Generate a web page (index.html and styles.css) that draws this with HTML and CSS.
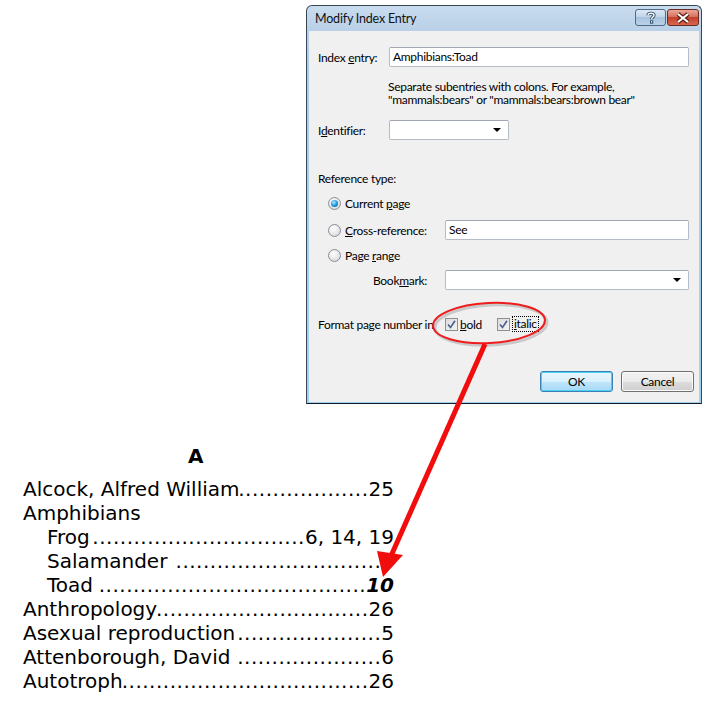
FILE: index.html
```html
<!DOCTYPE html>
<html>
<head>
<meta charset="utf-8">
<title>Modify Index Entry</title>
<link rel="stylesheet" href="styles.css">
</head>
<body>
<div class="page">
  <div class="dialog">
    <div class="titlebar">
      <span class="title">Modify Index Entry</span>
      <div class="caption-btns">
        <span class="cap-btn help"><svg width="12" height="13" viewBox="0 0 12 13"><path d="M3 4.2 C3 1.6 9 1.6 9 4.2 C9 6 6.6 6.2 6.6 8.2" fill="none" stroke="#27435e" stroke-width="3.2"/><path d="M3 4.2 C3 1.6 9 1.6 9 4.2 C9 6 6.6 6.2 6.6 8.2" fill="none" stroke="#fff" stroke-width="1.4"/><rect x="5" y="9.4" width="3.2" height="3.2" fill="#27435e"/><rect x="5.9" y="10.2" width="1.4" height="1.4" fill="#fff"/></svg></span>
        <span class="cap-btn close"><svg width="16" height="12" viewBox="0 0 16 12"><path d="M3 2 L13 10 M13 2 L3 10" stroke="#5a1a12" stroke-width="4.4"/><path d="M3 2 L13 10 M13 2 L3 10" stroke="#fff" stroke-width="2.2"/></svg></span>
      </div>
    </div>
    <div class="client">
      <div class="row r-entry">
        <span class="lbl">Index <u>e</u>ntry:</span>
        <div class="field">Amphibians:Toad</div>
      </div>
      <p class="help-text">Separate subentries with colons. For example,<br>"mammals:bears" or "mammals:bears:brown bear"</p>
      <div class="row r-ident">
        <span class="lbl">I<u>d</u>entifier:</span>
        <div class="field combo narrow"><span class="caret"></span></div>
      </div>
      <div class="section">Reference type:</div>
      <div class="row r-cur"><span class="radio on"></span><span>Current <u>p</u>age</span></div>
      <div class="row r-cross"><span class="radio"></span><span class="rlabel"><u>C</u>ross-reference:</span><div class="field">See</div></div>
      <div class="row r-range"><span class="radio"></span><span>Page <u>r</u>ange</span></div>
      <div class="row r-bm"><span class="bm-label">Book<u>m</u>ark:</span><div class="field combo"><span class="caret"></span></div></div>
      <div class="row r-format">
        <span class="fmt-label">Format page number in</span>
        <span class="check"><svg width="11" height="11" viewBox="0 0 11 11"><path d="M2 5.5 L4.5 8.5 L9 1.8" fill="none" stroke="#4a5f8c" stroke-width="1.6"/></svg></span>
        <span class="cb-text"><u>b</u>old</span>
        <span class="check"><svg width="11" height="11" viewBox="0 0 11 11"><path d="M2 5.5 L4.5 8.5 L9 1.8" fill="none" stroke="#4a5f8c" stroke-width="1.6"/></svg></span>
        <span class="cb-focus"><u>i</u>talic</span>
      </div>
      <div class="buttons">
        <span class="btn default">OK</span>
        <span class="btn">Cancel</span>
      </div>
    </div>
  </div>

  <div class="index">
    <div class="letter">A</div>
    <div class="entry"><span class="name">Alcock, Alfred William</span><span class="dots"><span>...................</span></span><span class="num">25</span></div>
    <div class="entry"><span class="name">Amphibians</span></div>
    <div class="entry sub"><span class="name">Frog</span><span class="dots"><span>...............................</span></span><span class="num">6, 14, 19</span></div>
    <div class="entry sub"><span class="name">Salamander</span><span class="dots"><span>..............................</span></span><span class="num">8</span></div>
    <div class="entry sub"><span class="name">Toad</span><span class="dots"><span>.......................................</span></span><span class="num bi">10</span></div>
    <div class="entry"><span class="name">Anthropology</span><span class="dots"><span>...............................</span></span><span class="num">26</span></div>
    <div class="entry"><span class="name">Asexual reproduction</span><span class="dots"><span>.....................</span></span><span class="num">5</span></div>
    <div class="entry"><span class="name">Attenborough, David</span><span class="dots"><span>.....................</span></span><span class="num">6</span></div>
    <div class="entry"><span class="name">Autotroph</span><span class="dots"><span>....................................</span></span><span class="num">26</span></div>
  </div>
</div>

<svg class="overlay" width="715" height="703" viewBox="0 0 715 703">
  <ellipse cx="491" cy="325" rx="56" ry="20" fill="none" stroke="#9a9a9a" stroke-opacity="0.45" stroke-width="3" transform="rotate(-3 491 325)"/>
  <ellipse cx="489" cy="323" rx="56" ry="20" fill="none" stroke="#ee1c1c" stroke-width="2" transform="rotate(-3 489 323)"/>
  <line x1="485" y1="344" x2="391" y2="556" stroke="#f20d0d" stroke-width="5"/>
  <polygon points="377,551 403,555 383,577" fill="#f20d0d"/>
</svg>
</body>
</html>
```
FILE: styles.css
```css
* { box-sizing: border-box; }

body {
  margin: 0;
  width: 715px;
  height: 703px;
  position: relative;
  overflow: hidden;
  background: #ffffff;
  font-family: "Noto Sans", sans-serif;
}

.page { padding-top: 5px; }

/* ---------- dialog ---------- */
.dialog {
  margin-left: 306px;
  width: 396px;
  height: 399px;
  border: 1px solid #3a4652;
  border-bottom-color: #101820;
  border-radius: 6px 6px 0 0;
  padding: 0 2px 1px;
  background: linear-gradient(#c9dcef 0, #b9d0e8 25px, #a8cdec 60px, #9fd2f2 100%);
  display: flex;
  flex-direction: column;
  font-family: Lato, "Noto Sans", sans-serif;
  font-size: 12px;
  letter-spacing: -0.3px;
  color: #000;
}

.titlebar {
  height: 25px;
  display: flex;
  align-items: center;
  justify-content: space-between;
  padding-left: 6px;
}

.title {
  font-size: 12.5px;
  color: #111;
  letter-spacing: -0.2px;
}

.caption-btns {
  display: flex;
  gap: 1px;
  align-self: flex-start;
  margin-top: 3px;
}

.cap-btn {
  width: 31px;
  height: 17px;
  border: 1px solid #4d6a86;
  border-radius: 3px;
  display: flex;
  align-items: center;
  justify-content: center;
}

.cap-btn.help {
  background: linear-gradient(#dbe8f5 0, #c2d6ea 45%, #a8c3de 50%, #b9d1e8 100%);
}

.cap-btn.close {
  width: 32px;
  border-color: #6b2a20;
  background: linear-gradient(#e9a89a 0, #d7705d 45%, #c4412a 50%, #d7674f 100%);
}

.client {
  flex: 1;
  background: #f0f0f0;
  padding: 16px 10px 0 9px;
  display: flex;
  flex-direction: column;
}

.row {
  display: flex;
  align-items: center;
  height: 20px;
}

.lbl { width: 71px; flex-shrink: 0; }

.field {
  flex: 1;
  height: 20px;
  background: #fff;
  border: 1px solid #b5bcc6;
  border-top-color: #a0a7b2;
  border-radius: 2px;
  padding: 0 3px;
  line-height: 18px;
  display: flex;
  align-items: center;
}

.combo { justify-content: flex-end; padding-right: 7px; }
.combo.narrow { flex: 0 0 120px; }

.caret {
  width: 0;
  height: 0;
  border-left: 4px solid transparent;
  border-right: 4px solid transparent;
  border-top: 4px solid #000;
}

.help-text {
  margin: 13px 0 0 70px;
  line-height: 13px;
}

.r-ident { margin-top: 14px; }

.section {
  margin-top: 32px;
  line-height: 14px;
}

.r-cur { margin-top: 7px; }
.r-cross { margin-top: 7px; }
.r-range { margin-top: 5px; }
.r-bm { margin-top: 5px; }

.radio {
  width: 13px;
  height: 13px;
  border-radius: 50%;
  margin: 0 4px 0 10px;
  flex-shrink: 0;
  border: 1px solid #8a8f96;
  background: radial-gradient(circle at 40% 35%, #ffffff 0, #e4e6e8 55%, #c9ccd0 100%);
  position: relative;
}

.radio.on::after {
  content: "";
  position: absolute;
  left: 2px;
  top: 2px;
  width: 7px;
  height: 7px;
  border-radius: 50%;
  background: radial-gradient(circle at 40% 35%, #b8ecff 0, #2aa0de 45%, #0d4f86 100%);
}

.rlabel { width: 100px; flex-shrink: 0; }

.bm-label { margin-left: 55px; width: 72px; flex-shrink: 0; }

.r-format { margin-top: 24px; }

.fmt-label { width: 127px; flex-shrink: 0; white-space: nowrap; }

.check {
  width: 13px;
  height: 13px;
  flex-shrink: 0;
  border: 1px solid #8e8f8f;
  background: linear-gradient(135deg, #dcdcdc, #f4f4f4);
  display: flex;
  align-items: center;
  justify-content: center;
  margin-right: 2px;
}

.cb-text { width: 37px; }

.cb-focus {
  border: 1px dotted #000;
  padding: 0 1px;
  line-height: 14px;
}

.buttons {
  margin-top: 37px;
  display: flex;
  justify-content: flex-end;
  gap: 8px;
  margin-right: -5px;
}

.btn {
  width: 73px;
  height: 21px;
  border: 1px solid #707070;
  border-radius: 3px;
  background: linear-gradient(#f2f2f2 0, #ebebeb 50%, #dddddd 51%, #cfcfcf 100%);
  display: flex;
  align-items: center;
  justify-content: center;
  box-shadow: inset 0 0 0 1px #fbfbfb;
}

.btn.default {
  border-color: #3c7fb1;
  background: linear-gradient(#eaf6fd 0, #d9f0fc 50%, #bee6fd 51%, #a7d9f5 100%);
  box-shadow: inset 0 0 0 1px #48d2f8;
}

/* ---------- index ---------- */
.index {
  margin: 40px 0 0 23px;
  width: 371px;
  font-family: "DejaVu Sans", Verdana, sans-serif;
  font-size: 20px;
  line-height: 24px;
  color: #000;
}

.letter {
  font-weight: bold;
  padding-left: 165px;
  margin-bottom: 9px;
}

.entry {
  display: flex;
  white-space: nowrap;
}

.entry.sub { padding-left: 24px; }

.dots {
  flex: 1;
  display: flex;
  justify-content: flex-end;
  overflow: hidden;
  letter-spacing: 0.5px;
}

.num.bi { font-weight: bold; font-style: italic; }

/* ---------- overlay ---------- */
.overlay {
  position: absolute;
  left: 0;
  top: 0;
  pointer-events: none;
}
```
